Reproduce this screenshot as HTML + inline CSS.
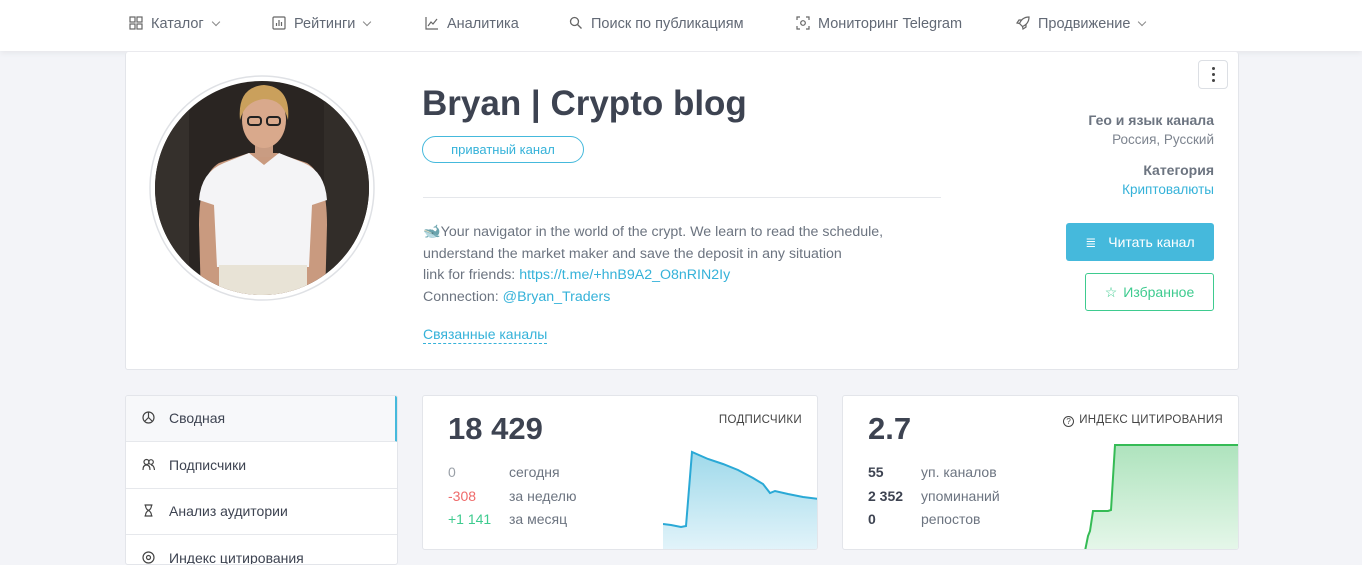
<!DOCTYPE html>
<html><head><meta charset="utf-8"><style>
*{box-sizing:border-box;margin:0;padding:0}
body{width:1362px;height:558px;overflow:hidden;background:#f3f4f8;font-family:"Liberation Sans",sans-serif;color:#3d4351;position:relative}
.abs{position:absolute}
.nav{left:0;top:0;width:1362px;height:51px;background:#fff;box-shadow:0 2px 6px rgba(0,0,0,.06)}
.ni{position:absolute;top:16px;font-size:14.5px;color:#626975;white-space:nowrap}
.ni svg{vertical-align:-2px;margin-right:8px}
.chev{display:inline-block;margin-left:9px;width:6px;height:6px;border-right:1.2px solid #888;border-bottom:1.2px solid #888;transform:rotate(45deg);vertical-align:3px}
.card{background:#fff;border:1px solid #e3e5ea;border-radius:3px}
.desc{font-size:14.2px;color:#6c7480;line-height:21.5px}
a{color:#35b2d9;text-decoration:none}
.side div{position:absolute;left:0;width:271px;height:46px;border-bottom:1px solid #e6e8ec;font-size:14px;color:#3d4351;padding:14px 0 0 43px}
.side svg{position:absolute;left:16px;top:15px}
.st{font-size:14px;line-height:23.5px}
</style></head><body>
<div class="abs nav">
 <div class="ni" style="left:129px"><svg width="14" height="14" viewBox="0 0 14 14" fill="none" stroke="#666" stroke-width="1.2"><rect x="1" y="1" width="5" height="5"/><rect x="8" y="1" width="5" height="5"/><rect x="1" y="8" width="5" height="5"/><rect x="8" y="8" width="5" height="5"/></svg>Каталог<span class="chev"></span></div>
 <div class="ni" style="left:272px"><svg width="14" height="14" viewBox="0 0 14 14" fill="none" stroke="#666" stroke-width="1.2"><rect x="1" y="1" width="12" height="12" rx="1"/><path d="M4.5 10V7M7 10V4M9.5 10V6"/></svg>Рейтинги<span class="chev"></span></div>
 <div class="ni" style="left:425px"><svg width="14" height="14" viewBox="0 0 14 14" fill="none" stroke="#666" stroke-width="1.2"><path d="M1 1v12h12M3 10l3-4 2 2 4-5"/></svg>Аналитика</div>
 <div class="ni" style="left:569px"><svg width="14" height="14" viewBox="0 0 14 14" fill="none" stroke="#666" stroke-width="1.3"><circle cx="5.5" cy="5.5" r="4"/><path d="M8.5 8.5l4 4"/></svg>Поиск по публикациям</div>
 <div class="ni" style="left:796px"><svg width="14" height="14" viewBox="0 0 14 14" fill="none" stroke="#666" stroke-width="1.2"><path d="M1 4V1h3M10 1h3v3M13 10v3h-3M4 13H1v-3"/><circle cx="7" cy="7" r="2.3"/></svg>Мониторинг Telegram</div>
 <div class="ni" style="left:1016px"><svg width="14" height="14" viewBox="0 0 14 14" fill="none" stroke="#666" stroke-width="1.2"><path d="M13 1C8 1 5 4 3.5 7.5l3 3C10 9 13 6 13 1zM3.5 7.5L1 7l2-3h3M6.5 10.5L7 13l3-2V8"/></svg>Продвижение<span class="chev"></span></div>
</div>

<div class="abs card" style="left:125px;top:52px;width:1114px;height:318px;border-top:none"></div>
<svg class="abs" style="left:149px;top:75px" width="226" height="226" viewBox="0 0 226 226">
 <defs><clipPath id="c"><circle cx="113" cy="113" r="107"/></clipPath></defs>
 <circle cx="113" cy="113" r="112" fill="#fff" stroke="#dfe1e5" stroke-width="1.5"/>
 <g clip-path="url(#c)">
  <rect width="226" height="226" fill="#2a2522"/>
  <rect x="0" y="0" width="40" height="226" fill="#35302c"/>
  <rect x="175" y="0" width="51" height="226" fill="#322d29"/>
  <path d="M52 226 L50 150 Q50 100 70 88 L100 78 L128 78 L158 88 Q178 100 178 150 L176 226Z" fill="#c99a7f"/>
  <path d="M50 125 Q52 97 75 88 L100 78 L115 90 L130 78 L155 88 Q176 97 178 125 L163 130 L160 192 L68 192 L65 130Z" fill="#f4f4f6"/>
  <rect x="70" y="190" width="88" height="40" fill="#e8e3d6"/>
  <rect x="106" y="60" width="18" height="22" fill="#c99c82"/>
  <ellipse cx="115" cy="45" rx="22" ry="28" fill="#d9a98c"/>
  <path d="M91 45 Q88 12 115 10 Q142 12 139 45 Q134 24 115 24 Q96 26 91 45Z" fill="#caa05c"/>
  <rect x="99" y="42" width="13" height="8" rx="3" fill="none" stroke="#222" stroke-width="2"/>
  <rect x="118" y="42" width="13" height="8" rx="3" fill="none" stroke="#222" stroke-width="2"/>
 </g>
</svg>

<div class="abs" style="left:422px;top:84px;font-size:35px;font-weight:bold;color:#3d4351">Bryan | Crypto blog</div>
<div class="abs" style="left:422px;top:136px;width:162px;height:27px;border:1px solid #45b9dc;border-radius:14px;font-size:13px;color:#35b2d9;text-align:center;line-height:25px">приватный канал</div>
<div class="abs" style="left:423px;top:197px;width:518px;height:1px;background:#e5e7eb"></div>
<div class="abs desc" style="left:423px;top:222px;width:540px">🐋Your navigator in the world of the crypt. We learn to read the schedule,<br>understand the market maker and save the deposit in any situation<br>link for friends: <a>https://t.me/+hnB9A2_O8nRIN2Iy</a><br>Connection: <a>@Bryan_Traders</a></div>
<div class="abs" style="left:423px;top:326px;font-size:14px;color:#35b2d9;border-bottom:1px dashed #35b2d9;padding-bottom:1px">Связанные каналы</div>

<div class="abs" style="left:1198px;top:60px;width:30px;height:29px;border:1px solid #dcdfe4;border-radius:4px"><div style="position:absolute;left:13px;top:6px;width:3px;height:3px;border-radius:2px;background:#444;box-shadow:0 6px 0 #444,0 12px 0 #444"></div></div>
<div class="abs" style="right:148px;top:110px;text-align:right;font-size:14px;line-height:20px">
 <div style="font-weight:bold;color:#6c7480">Гео и язык канала</div><div style="color:#7d848f;font-size:13.5px">Россия, Русский</div>
 <div style="font-weight:bold;color:#6c7480;margin-top:10px">Категория</div><div style="color:#35b2d9;font-size:13.5px">Криптовалюты</div>
</div>
<div class="abs" style="left:1066px;top:223px;width:148px;height:38px;background:#45b9dc;border-radius:3px;color:#fff;font-size:14px;line-height:38px;text-align:center"><span style="font-size:13px;margin-right:12px">≣</span>Читать канал</div>
<div class="abs" style="left:1085px;top:273px;width:129px;height:38px;border:1px solid #3ecb8f;border-radius:3px;color:#3ecb8f;font-size:14px;line-height:36px;text-align:center"><span style="margin-right:6px">☆</span>Избранное</div>

<div class="abs card side" style="left:125px;top:395px;width:273px;height:170px;overflow:hidden">
 <div style="top:0;background:#f7f8fa;border-right:3px solid #45b9dc;width:272px"><svg width="13" height="13" viewBox="0 0 13 13" fill="none" stroke="#444" stroke-width="1.2"><circle cx="6.5" cy="6.5" r="5.5"/><path d="M6.5 1v5.5L3 10M6.5 6.5L10 10"/></svg>Сводная</div>
 <div style="top:47px"><svg width="13" height="13" viewBox="0 0 13 13" fill="none" stroke="#444" stroke-width="1.2"><circle cx="4.5" cy="4" r="2.5"/><circle cx="9" cy="4" r="2.3"/><path d="M1 12q0-5 3.5-5t3.5 5M9 7q3 0 3.5 5"/></svg>Подписчики</div>
 <div style="top:93px"><svg width="13" height="13" viewBox="0 0 13 13" fill="none" stroke="#444" stroke-width="1.2"><path d="M2.5 1h8M2.5 12h8M3.5 1q0 4 3 5.5q-3 1.5-3 5.5M9.5 1q0 4-3 5.5q3 1.5 3 5.5"/></svg>Анализ аудитории</div>
 <div style="top:140px"><svg width="13" height="13" viewBox="0 0 13 13" fill="none" stroke="#444" stroke-width="1.2"><circle cx="6.5" cy="6.5" r="5.5"/><circle cx="6.5" cy="6.5" r="2"/></svg>Индекс цитирования</div>
</div>

<div class="abs card" style="left:422px;top:395px;width:396px;height:155px;overflow:hidden">
 <div class="abs" style="left:25px;top:15px;font-size:31px;font-weight:bold">18 429</div>
 <div class="abs" style="right:15px;top:18px;font-size:11.5px;color:#444;letter-spacing:.3px">ПОДПИСЧИКИ</div>
 <div class="abs st" style="left:25px;top:65px;color:#9aa0a8">0</div>
 <div class="abs st" style="left:25px;top:89px;color:#ef6a6a">-308</div>
 <div class="abs st" style="left:25px;top:112px;color:#3ecb8f">+1 141</div>
 <div class="abs st" style="left:86px;top:65px;color:#6c7480">сегодня<br>за неделю<br>за месяц</div>
 <svg class="abs" style="left:240px;top:50px" width="156" height="105" viewBox="0 0 156 105">
  <defs><linearGradient id="g1" x1="0" y1="0" x2="0" y2="1"><stop offset="0" stop-color="#9fd9ea"/><stop offset="1" stop-color="#e3f4fa"/></linearGradient></defs>
  <path d="M0 78 L8 79 L18 81 L23 80 L29 6 L45 13 L60 18 L75 24 L90 32 L100 38 L107 47 L112 45 L125 48 L140 51 L156 53 L156 105 L0 105Z" fill="url(#g1)"/>
  <path d="M0 78 L8 79 L18 81 L23 80 L29 6 L45 13 L60 18 L75 24 L90 32 L100 38 L107 47 L112 45 L125 48 L140 51 L156 53" fill="none" stroke="#2aa9d6" stroke-width="2"/>
 </svg>
</div>

<div class="abs card" style="left:842px;top:395px;width:397px;height:155px;overflow:hidden">
 <div class="abs" style="left:25px;top:15px;font-size:31px;font-weight:bold">2.7</div>
 <div class="abs" style="right:15px;top:18px;font-size:11.5px;color:#444;letter-spacing:.3px"><span style="display:inline-block;width:11px;height:11px;border:1.2px solid #444;border-radius:50%;font-size:8px;line-height:9px;text-align:center;vertical-align:-1px;margin-right:5px">?</span>ИНДЕКС ЦИТИРОВАНИЯ</div>
 <div class="abs st" style="left:25px;top:65px;color:#3d4351;font-weight:bold">55<br>2 352<br>0</div>
 <div class="abs st" style="left:78px;top:65px;color:#6c7480">уп. каналов<br>упоминаний<br>репостов</div>
 <svg class="abs" style="left:240px;top:47px" width="157" height="108" viewBox="0 0 157 108">
  <defs><linearGradient id="g2" x1="0" y1="0" x2="0" y2="1"><stop offset="0" stop-color="#aee3bd"/><stop offset="1" stop-color="#e6f7ea"/></linearGradient></defs>
  <path d="M2 108 L5 93 L7 88 L10 68 L25 68 L28 67 L32 2 L157 2 L157 108Z" fill="url(#g2)"/>
  <path d="M2 108 L5 93 L7 88 L10 68 L25 68 L28 67 L32 2 L157 2" fill="none" stroke="#35bb55" stroke-width="2"/>
 </svg>
</div>
</body></html>
